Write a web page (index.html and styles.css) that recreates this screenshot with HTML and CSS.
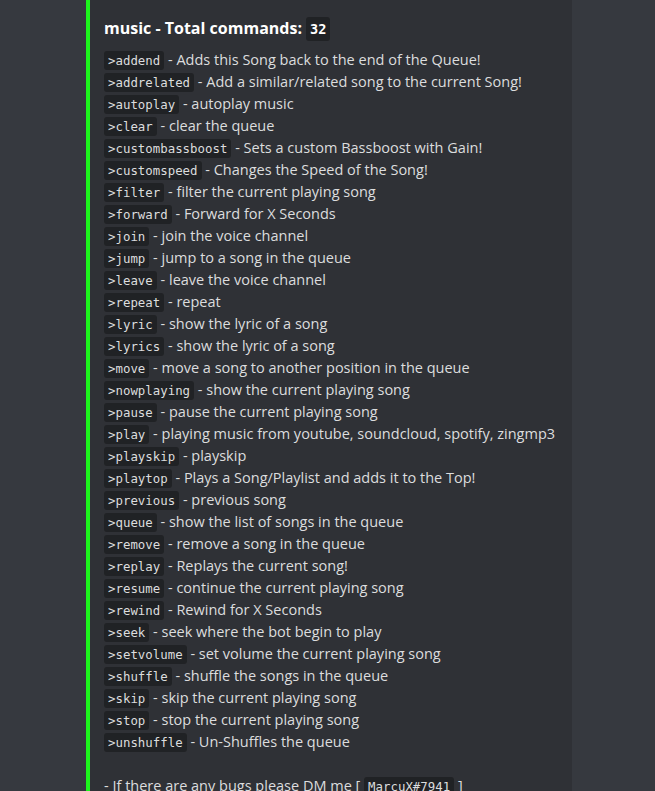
FILE: index.html
```html
<!DOCTYPE html>
<html>
<head>
<meta charset="utf-8">
<link rel="stylesheet" href="styles.css">
</head>
<body>
<div class="chat">
  <div class="embed">
    <div class="title">music - Total commands: <code class="count">32</code></div>
    <div class="desc">
      <div class="row"><code>&gt;addend</code> - Adds this Song back to the end of the Queue!</div>
      <div class="row"><code>&gt;addrelated</code> - Add a similar/related song to the current Song!</div>
      <div class="row"><code>&gt;autoplay</code> - autoplay music</div>
      <div class="row"><code>&gt;clear</code> - clear the queue</div>
      <div class="row"><code>&gt;custombassboost</code> - Sets a custom Bassboost with Gain!</div>
      <div class="row"><code>&gt;customspeed</code> - Changes the Speed of the Song!</div>
      <div class="row"><code>&gt;filter</code> - filter the current playing song</div>
      <div class="row"><code>&gt;forward</code> - Forward for X Seconds</div>
      <div class="row"><code>&gt;join</code> - join the voice channel</div>
      <div class="row"><code>&gt;jump</code> - jump to a song in the queue</div>
      <div class="row"><code>&gt;leave</code> - leave the voice channel</div>
      <div class="row"><code>&gt;repeat</code> - repeat</div>
      <div class="row"><code>&gt;lyric</code> - show the lyric of a song</div>
      <div class="row"><code>&gt;lyrics</code> - show the lyric of a song</div>
      <div class="row"><code>&gt;move</code> - move a song to another position in the queue</div>
      <div class="row"><code>&gt;nowplaying</code> - show the current playing song</div>
      <div class="row"><code>&gt;pause</code> - pause the current playing song</div>
      <div class="row"><code>&gt;play</code> - playing music from youtube, soundcloud, spotify, zingmp3</div>
      <div class="row"><code>&gt;playskip</code> - playskip</div>
      <div class="row"><code>&gt;playtop</code> - Plays a Song/Playlist and adds it to the Top!</div>
      <div class="row"><code>&gt;previous</code> - previous song</div>
      <div class="row"><code>&gt;queue</code> - show the list of songs in the queue</div>
      <div class="row"><code>&gt;remove</code> - remove a song in the queue</div>
      <div class="row"><code>&gt;replay</code> - Replays the current song!</div>
      <div class="row"><code>&gt;resume</code> - continue the current playing song</div>
      <div class="row"><code>&gt;rewind</code> - Rewind for X Seconds</div>
      <div class="row"><code>&gt;seek</code> - seek where the bot begin to play</div>
      <div class="row"><code>&gt;setvolume</code> - set volume the current playing song</div>
      <div class="row"><code>&gt;shuffle</code> - shuffle the songs in the queue</div>
      <div class="row"><code>&gt;skip</code> - skip the current playing song</div>
      <div class="row"><code>&gt;stop</code> - stop the current playing song</div>
      <div class="row"><code>&gt;unshuffle</code> - Un-Shuffles the queue</div>
      <div class="row blank"></div>
      <div class="row">- If there are any bugs please DM me [ <code>MarcuX#7941</code> ]</div>
    </div>
  </div>
</div>
</body>
</html>
```
FILE: styles.css
```css
html, body {
  margin: 0;
  padding: 0;
  background: #36393f;
  height: 100%;
  overflow: hidden;
}
.chat {
  padding-left: 86px;
}
.embed {
  width: 486px;
  box-sizing: border-box;
  border-left: 4px solid #1cf51c;
  background: #2f3136;
  border-radius: 0 0 4px 0;
  padding: 15px 16px 16px 14px;
  font-family: "Open Sans", "Noto Sans", sans-serif;
  color: #dcddde;
}
.title {
  font-size: 16px;
  font-weight: 700;
  color: #ffffff;
  line-height: 26px;
  margin-bottom: 7px;
}
.desc {
  font-size: 14.5px;
  line-height: 22px;
}
.row {
  white-space: nowrap;
  height: 22px;
}
code {
  font-family: "DejaVu Sans Mono", "Liberation Mono", monospace;
  font-size: 12.4px;
  background: #202225;
  border-radius: 3px;
  padding: 2px 4px;
  color: #dcddde;
}
.count {
  font-size: 13.6px;
  font-weight: 700;
  color: #ffffff;
  padding: 4px 4px;
}
```
